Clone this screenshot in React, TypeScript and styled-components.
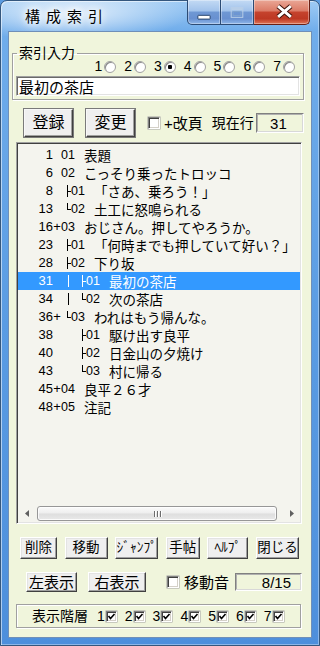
import styled, { createGlobalStyle } from 'styled-components';

type Branch = 'pipe' | 'blank' | 'tee' | 'end';

interface Entry {
  num: string;
  plus?: boolean;
  tree: Branch[];
  code: string;
  title: string;
  selected?: boolean;
}

const entries: Entry[] = [
  { num: '1', tree: [], code: '01', title: '表題' },
  { num: '6', tree: [], code: '02', title: 'こっそり乗ったトロッコ' },
  { num: '8', tree: ['tee'], code: '01', title: '「さあ、乗ろう！」' },
  { num: '13', tree: ['end'], code: '02', title: '土工に怒鳴られる' },
  { num: '16', plus: true, tree: [], code: '03', title: 'おじさん。押してやろうか。' },
  { num: '23', tree: ['tee'], code: '01', title: '「何時までも押していて好い？」' },
  { num: '28', tree: ['tee'], code: '02', title: '下り坂' },
  { num: '31', tree: ['pipe', 'tee'], code: '01', title: '最初の茶店', selected: true },
  { num: '34', tree: ['pipe', 'end'], code: '02', title: '次の茶店' },
  { num: '36', plus: true, tree: ['end'], code: '03', title: 'われはもう帰んな。' },
  { num: '38', tree: ['blank', 'tee'], code: '01', title: '駆け出す良平' },
  { num: '40', tree: ['blank', 'tee'], code: '02', title: '日金山の夕焼け' },
  { num: '43', tree: ['blank', 'end'], code: '03', title: '村に帰る' },
  { num: '45', plus: true, tree: [], code: '04', title: '良平２６才' },
  { num: '48', plus: true, tree: [], code: '05', title: '注記' },
];

const bottomButtons = [
  { label: '削除', w: 37 },
  { label: '移動', w: 43 },
  { label: 'ｼﾞｬﾝﾌﾟ', w: 43 },
  { label: '手帖', w: 34 },
  { label: 'ﾍﾙﾌﾟ', w: 41 },
  { label: '閉じる', w: 43 },
];

const levels = [1, 2, 3, 4, 5, 6, 7];

function TreeGlyph({ kind }: { kind: Branch }) {
  const last = kind === 'tee' || kind === 'end';
  const w = last ? 10 : 15;
  return (
    <TreeCell $w={w}>
      <svg width={w} height="18" viewBox={`0 0 ${w} 18`}>
        {kind === 'pipe' && <line x1="7.5" y1="3" x2="7.5" y2="15" stroke="currentColor" />}
        {kind === 'tee' && (
          <>
            <line x1="6.5" y1="3" x2="6.5" y2="15" stroke="currentColor" />
            <line x1="6.5" y1="9.5" x2="10" y2="9.5" stroke="currentColor" />
          </>
        )}
        {kind === 'end' && (
          <>
            <line x1="6.5" y1="3" x2="6.5" y2="10" stroke="currentColor" />
            <line x1="6.5" y1="9.5" x2="10" y2="9.5" stroke="currentColor" />
          </>
        )}
      </svg>
    </TreeCell>
  );
}

function CheckBox({ checked, size }: { checked?: boolean; size: number }) {
  return (
    <Box $size={size}>
      {checked && (
        <svg width={size - 2} height={size - 2} viewBox="0 0 9 9">
          <polyline points="1.5,4 3.5,6.5 7.5,2" fill="none" stroke="#000" strokeWidth="1.6" />
        </svg>
      )}
    </Box>
  );
}

function App() {
  return (
    <>
      <GlobalStyle />
      <Window>
        <TitleBar>
          <Title>構成索引</Title>
          <Caption>
            <CapButton $kind="min">
              <svg width="34" height="25" viewBox="0 0 34 25">
                <rect x="10.5" y="15.5" width="13" height="4" fill="#fff" stroke="#1f3d66" rx="0.5" />
              </svg>
            </CapButton>
            <CapButton $kind="max">
              <svg width="33" height="25" viewBox="0 0 33 25">
                <rect x="10.5" y="7.5" width="12" height="10" fill="none" stroke="#b9cfe8" />
                <rect x="11" y="8" width="11" height="2" fill="#b9cfe8" />
                <rect x="12.5" y="11.5" width="8" height="4" fill="none" stroke="#7fa3cf" />
              </svg>
            </CapButton>
            <CapButton $kind="close">
              <svg width="56" height="25" viewBox="0 0 56 25">
                <path d="M24.5 6 L37.5 17 M37.5 6 L24.5 17" stroke="#3b1109" strokeWidth="5" />
                <path d="M24.5 6 L37.5 17 M37.5 6 L24.5 17" stroke="#fff" strokeWidth="3" />
              </svg>
            </CapButton>
          </Caption>
        </TitleBar>

        <Client>
          <Group>
            <Legend>索引入力</Legend>
            <RadioRow>
              {levels.map((n) => (
                <RadioItem key={n}>
                  {n}
                  <Radio $checked={n === 3} />
                </RadioItem>
              ))}
            </RadioRow>
            <TextField value="最初の茶店" readOnly />
          </Group>

          <ActionRow>
            <Button $w={49} $h={28} $fs={16} $strong>登録</Button>
            <Button $w={49} $h={28} $fs={16} $strong style={{ marginLeft: 13 }}>変更</Button>
            <CheckLabel $gap={4} $offset={13}>
              <CheckBox size={12} />
              +改頁
            </CheckLabel>
            <FieldLabel>現在行</FieldLabel>
            <ValueBox $w={48} $h={20} $pad={16}>31</ValueBox>
          </ActionRow>

          <ListBox>
            <ListBody>
              {entries.map((e) => (
                <Row key={e.num} $selected={e.selected}>
                  <NumCell>{e.num}</NumCell>
                  <PlusCell>{e.plus ? '+' : ''}</PlusCell>
                  {e.tree.map((t, i) => (
                    <TreeGlyph key={i} kind={t} />
                  ))}
                  <CodeCell>{e.code}</CodeCell>
                  <TitleCell>{e.title}</TitleCell>
                </Row>
              ))}
            </ListBody>
            <HScroll>
              <ArrowBtn>
                <svg width="4" height="7" viewBox="0 0 4 7">
                  <polygon points="4,0 0,3.5 4,7" fill="#606060" />
                </svg>
              </ArrowBtn>
              <Thumb>
                <Grip />
                <Grip />
                <Grip />
              </Thumb>
              <Track />
              <ArrowBtn>
                <svg width="4" height="7" viewBox="0 0 4 7">
                  <polygon points="0,0 4,3.5 0,7" fill="#606060" />
                </svg>
              </ArrowBtn>
            </HScroll>
          </ListBox>

          <ButtonRow>
            {bottomButtons.map((b) => (
              <Button key={b.label} $w={b.w} $h={22} $fs={13.5}>
                {b.label}
              </Button>
            ))}
          </ButtonRow>

          <ViewRow>
            <Button $w={51} $h={20} $fs={15}>左表示</Button>
            <Button $w={58} $h={20} $fs={15} style={{ marginLeft: 11 }}>右表示</Button>
            <CheckLabel $gap={5} $offset={21}>
              <CheckBox size={12} />
              移動音
            </CheckLabel>
            <ValueBox $w={67} $h={18} $pad={10} style={{ marginLeft: 6 }}>8/15</ValueBox>
          </ViewRow>

          <LevelGroup>
            <LevelLabel>表示階層</LevelLabel>
            <LevelList>
              {levels.map((n) => (
                <LevelItem key={n}>
                  {n}
                  <CheckBox size={11} checked />
                </LevelItem>
              ))}
            </LevelList>
          </LevelGroup>
        </Client>
      </Window>
    </>
  );
}

const GlobalStyle = createGlobalStyle`
  html, body {
    margin: 0;
    padding: 0;
  }
  body {
    width: 320px;
    height: 646px;
    overflow: hidden;
    background: #5b9be0;
    font-family: 'Liberation Sans', 'Noto Sans CJK JP', sans-serif;
  }
`;

const Window = styled.div`
  box-sizing: border-box;
  width: 320px;
  height: 646px;
  display: flex;
  flex-direction: column;
  padding: 0 7px 7px 7px;
  border: 1px solid #34577e;
  border-radius: 7px 7px 0 0;
  background:
    radial-gradient(ellipse 160px 38px at 70px 12px, rgba(255, 255, 255, 0.75), rgba(255, 255, 255, 0) 75%),
    linear-gradient(180deg, #9fcbf4 0, #70adeb 30px, #5a9ce3 50%, #4d8fdc 100%);
  box-shadow: inset 1px 1px 0 rgba(255, 255, 255, 0.55), inset -1px -1px 0 rgba(255, 255, 255, 0.35);
`;

const TitleBar = styled.div`
  height: 30px;
  display: flex;
  align-items: flex-start;
`;

const Title = styled.div`
  margin: 6px 0 0 17px;
  font-family: 'Noto Sans CJK JP', sans-serif;
  font-size: 15px;
  line-height: 18px;
  letter-spacing: 6px;
  color: #000;
  text-shadow: 0 0 6px #fff, 0 0 10px #fff, 0 0 14px rgba(255, 255, 255, 0.8);
`;

const Caption = styled.div`
  margin: -1px 2px 0 auto;
  display: flex;
`;

const capBg = {
  min: 'linear-gradient(180deg, #c3daf4 0%, #a1c2eb 46%, #6f98d4 50%, #6890d0 78%, #8fb7e8 100%)',
  max: 'linear-gradient(180deg, #c3daf4 0%, #a1c2eb 46%, #6f98d4 50%, #6890d0 78%, #8fb7e8 100%)',
  close: 'linear-gradient(180deg, #eaa796 0%, #db7a66 46%, #c5432d 50%, #bd3823 78%, #df7557 100%)',
};

const CapButton = styled.div<{ $kind: 'min' | 'max' | 'close' }>`
  box-sizing: border-box;
  height: 25px;
  width: ${(p) => (p.$kind === 'min' ? 34 : p.$kind === 'max' ? 33 : 56)}px;
  display: flex;
  background: ${(p) => capBg[p.$kind]};
  border: 1px solid ${(p) => (p.$kind === 'close' ? '#6b1f14' : '#2c4b74')};
  border-top: none;
  border-left-width: ${(p) => (p.$kind === 'min' ? 1 : 0)}px;
  border-radius: ${(p) => (p.$kind === 'min' ? '0 0 0 5px' : p.$kind === 'close' ? '0 0 5px 0' : '0')};
  box-shadow: inset 0 0 0 1px rgba(255, 255, 255, 0.35);
`;

const Client = styled.div`
  flex: 1;
  display: flex;
  flex-direction: column;
  background: #f0f5dc;
  border: 1px solid #6f8fb8;
  color: #000;
`;

const Group = styled.fieldset`
  margin: 14px 7px 0 3px;
  padding: 0 3px 3px 3px;
  min-width: 0;
  border: 1px solid #a0a0a0;
  box-shadow: 1px 1px 0 #fff, inset 1px 1px 0 #fff;
  display: flex;
  flex-direction: column;
`;

const Legend = styled.legend`
  margin-left: 1px;
  padding: 0 2px;
  font-size: 14px;
  line-height: 14px;
`;

const RadioRow = styled.div`
  height: 13px;
  padding-right: 5px;
  display: flex;
  justify-content: flex-end;
  align-items: center;
  gap: 8px;
  font-size: 14px;
  line-height: 13px;
`;

const RadioItem = styled.span`
  display: flex;
  align-items: center;
  gap: 2px;
`;

const Radio = styled.span<{ $checked?: boolean }>`
  box-sizing: border-box;
  width: 12px;
  height: 12px;
  border-radius: 50%;
  border: 1px solid #a0a0a0;
  background: ${(p) =>
    p.$checked ? 'radial-gradient(circle, #000 0 2px, #fff 2.5px)' : '#fff'};
  box-shadow: inset 1px 1px 0 #8a8a8a;
`;

const TextField = styled.input`
  box-sizing: border-box;
  margin: 3px 0 0 0;
  height: 20px;
  width: 100%;
  padding: 0 2px;
  border: 1px solid;
  border-color: #a0a0a0 #fff #fff #a0a0a0;
  box-shadow: inset 1px 1px 0 #696969, inset -1px -1px 0 #e3e3e3;
  background: #fff;
  font-family: 'Liberation Sans', 'Noto Sans CJK JP', sans-serif;
  font-size: 15px;
  color: #000;
  outline: none;
`;

const ActionRow = styled.div`
  margin-top: 9px;
  height: 28px;
  padding-left: 15px;
  display: flex;
  align-items: center;
`;

const Button = styled.button<{ $w: number; $h: number; $fs?: number; $strong?: boolean }>`
  box-sizing: border-box;
  flex: none;
  width: ${(p) => p.$w}px;
  height: ${(p) => p.$h}px;
  padding: 0;
  display: flex;
  align-items: center;
  justify-content: center;
  white-space: nowrap;
  overflow: visible;
  font-family: 'Liberation Sans', 'Noto Sans CJK JP', sans-serif;
  font-size: ${(p) => p.$fs ?? 14}px;
  line-height: 1;
  color: #000;
  background: #efefef;
  border: 1px solid;
  border-color: ${(p) => (p.$strong ? '#f8f8f8 #404040 #404040 #f8f8f8' : '#fff #404040 #404040 #fff')};
  box-shadow: ${(p) =>
    p.$strong
      ? '0 0 0 1px #7a7a7a, inset -1px -1px 0 #a0a0a0'
      : 'inset -1px -1px 0 #a0a0a0, inset 1px 1px 0 #e3e3e3'};
`;

const CheckLabel = styled.label<{ $gap: number; $offset: number }>`
  margin-left: ${(p) => p.$offset}px;
  display: flex;
  align-items: center;
  gap: ${(p) => p.$gap}px;
  font-size: 15px;
  line-height: 1;
  white-space: nowrap;
`;

const Box = styled.span<{ $size: number }>`
  box-sizing: border-box;
  width: ${(p) => p.$size}px;
  height: ${(p) => p.$size}px;
  display: flex;
  align-items: center;
  justify-content: center;
  background: #fff;
  border: 1px solid;
  border-color: #808080 #fff #fff #808080;
  box-shadow: inset 1px 1px 0 #404040, inset -1px -1px 0 #d4d0c8, 0 0 0 0.5px #a0a0a0;
`;

const FieldLabel = styled.span`
  margin-left: 9px;
  font-size: 14px;
  line-height: 1;
  white-space: nowrap;
`;

const ValueBox = styled.div<{ $w: number; $h: number; $pad: number }>`
  box-sizing: border-box;
  margin-left: 2px;
  width: ${(p) => p.$w}px;
  height: ${(p) => p.$h}px;
  padding-right: ${(p) => p.$pad}px;
  display: flex;
  align-items: center;
  justify-content: flex-end;
  border: 1px solid;
  border-color: #808080 #fff #fff #808080;
  box-shadow: inset -1px -1px 0 #d8d8d8, inset 1px 1px 0 #b0b0b0;
  font-size: 15px;
  line-height: 1;
`;

const ListBox = styled.div`
  box-sizing: border-box;
  margin: 5px 9px 0 7px;
  height: 382px;
  display: flex;
  flex-direction: column;
  background: #f4f4ee;
  border: 1px solid;
  border-color: #a0a0a0 #fff #fff #a0a0a0;
  box-shadow: inset 1px 1px 0 #404040, inset -1px -1px 0 #e3e3e3;
  padding: 1px;
`;

const ListBody = styled.div`
  flex: 1;
  padding-top: 2px;
  overflow: hidden;
`;

const Row = styled.div<{ $selected?: boolean }>`
  height: 18px;
  display: flex;
  align-items: center;
  white-space: nowrap;
  font-size: 13.5px;
  line-height: 18px;
  background: ${(p) => (p.$selected ? '#3399ff' : 'transparent')};
  color: ${(p) => (p.$selected ? '#fff' : '#000')};
`;

const NumCell = styled.span`
  width: 35px;
  flex: none;
  text-align: right;
  font-size: 13px;
`;

const PlusCell = styled.span`
  width: 8px;
  flex: none;
  text-align: center;
  font-size: 13px;
`;

const TreeCell = styled.span<{ $w: number }>`
  width: ${(p) => p.$w}px;
  height: 18px;
  flex: none;
  display: flex;
`;

const CodeCell = styled.span`
  width: 14px;
  flex: none;
  font-size: 12.5px;
`;

const TitleCell = styled.span`
  margin-left: 9px;
  font-family: 'Noto Sans CJK JP', sans-serif;
`;

const HScroll = styled.div`
  height: 17px;
  display: flex;
  align-items: center;
  background: #f4f4ee;
`;

const ArrowBtn = styled.div`
  width: 17px;
  height: 17px;
  flex: none;
  display: flex;
  align-items: center;
  justify-content: center;
`;

const Thumb = styled.div`
  box-sizing: border-box;
  margin-left: 2px;
  width: 240px;
  height: 15px;
  display: flex;
  align-items: center;
  justify-content: center;
  gap: 2px;
  border: 1px solid #979797;
  border-radius: 3px;
  background: linear-gradient(180deg, #fbfbfb 0%, #eeeeee 48%, #dedede 52%, #e9e9e9 100%);
  box-shadow: inset 0 0 0 1px rgba(255, 255, 255, 0.8);
`;

const Grip = styled.span`
  width: 1px;
  height: 6px;
  background: #6d6d6d;
  box-shadow: 1px 0 0 #fff;
`;

const Track = styled.div`
  flex: 1;
`;

const ButtonRow = styled.div`
  margin-top: 13px;
  height: 22px;
  padding: 0 12px 0 11px;
  display: flex;
  justify-content: space-between;
`;

const ViewRow = styled.div`
  margin-top: 13px;
  height: 20px;
  padding-left: 17px;
  display: flex;
  align-items: center;
`;

const LevelGroup = styled.div`
  box-sizing: border-box;
  margin: 12px 10px 0 7px;
  height: 24px;
  padding-left: 15px;
  display: flex;
  align-items: center;
  border: 1px solid #a0a0a0;
  box-shadow: 1px 1px 0 #fff, inset 1px 1px 0 #fff;
`;

const LevelLabel = styled.span`
  font-size: 14px;
  line-height: 1;
  white-space: nowrap;
`;

const LevelList = styled.div`
  margin-left: 9px;
  display: flex;
  align-items: center;
  gap: 8px;
`;

const LevelItem = styled.span`
  display: flex;
  align-items: center;
  gap: 1px;
  font-size: 14px;
  line-height: 1;
`;

export default App;
